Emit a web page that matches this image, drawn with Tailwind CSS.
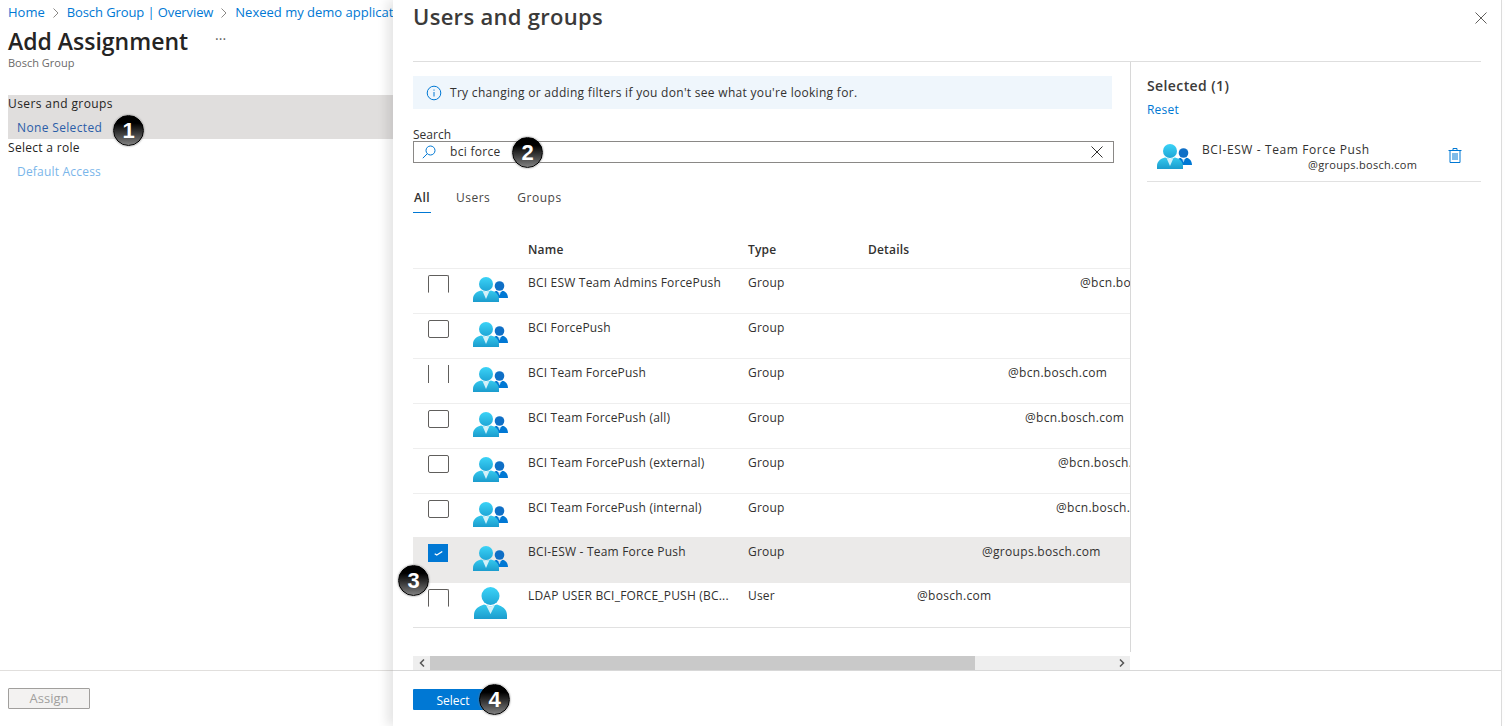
<!DOCTYPE html>
<html lang="en">
<head>
    <meta charset="UTF-8">
    <title>Add Assignment</title>
    <script src="https://cdn.jsdelivr.net/npm/@tailwindcss/browser@4"></script>
</head>
<body class="bg-white overflow-hidden font-['Open_Sans','Noto_Sans',sans-serif] text-[12px] text-[#323130]">

    <!-- shared icons -->
    <svg class="absolute w-0 h-0">
        <defs>
            <linearGradient id="headGrad" x1="0" y1="0" x2="0" y2="1"><stop offset="0" stop-color="#3bd3f7"/><stop offset="1" stop-color="#1fa6d6"/></linearGradient>
            <linearGradient id="bodyGrad" x1="0" y1="0" x2="0" y2="1"><stop offset="0" stop-color="#35c9ee"/><stop offset="1" stop-color="#1b9ccd"/></linearGradient>
        </defs>
        <symbol id="groupIcon" viewBox="0 0 35 25">
            <circle cx="26.500" cy="9" r="4.800" fill="#0f6fc6"/>
            <path d="M19 21c0-4 2-6.500 4.500-7.200l3 2.400 3-2.400C32.500 14.500 35 17 35 21z" fill="#0078d4"/>
            <path d="M25.300 15.500h2.400l-1.200 3z" fill="#b9dcf5"/>
            <circle cx="13" cy="7" r="7" fill="url(#headGrad)"/>
            <path d="M0 25v-3c0-5 4-7.500 8-8.500l5 1.500 5-1.500c4 1 8 3.500 8 8.500v3z" fill="url(#bodyGrad)"/>
            <path d="M9.500 14l3.500 1 3.500-1-3.500 8z" fill="#d4f1f9"/>
        </symbol>
        <symbol id="userIcon" viewBox="0 0 33 32">
            <circle cx="16.500" cy="9" r="9" fill="url(#headGrad)"/>
            <path d="M0 32v-4c0-6 5-9 10-10.500l6.500 2 6.500-2C28 19 33 22 33 28v4z" fill="url(#bodyGrad)"/>
            <path d="M12 18l4.500 1.500L21 18l-4.500 9z" fill="#d4f1f9"/>
        </symbol>
    </svg>

    <div class="flex w-[1509px] h-[726px]">

        <!-- Left blade -->
        <aside class="w-[393px] h-full flex flex-col shrink-0">
            <div class="flex-1 overflow-hidden">
                <nav class="flex items-center h-[25px] pl-2 whitespace-nowrap text-[13px] text-[#0078d4] overflow-hidden">
                    <span>Home</span>
                    <svg class="w-[8px] h-[10px] mx-[7px] shrink-0" viewBox="0 0 8 10" fill="none" stroke="#8a8886"><path d="M1.500.5 6 5 1.500 9.500"/></svg>
                    <span class="tracking-[-0.1px]">Bosch Group | Overview</span>
                    <svg class="w-[8px] h-[10px] mx-[7px] shrink-0" viewBox="0 0 8 10" fill="none" stroke="#8a8886"><path d="M1.500.5 6 5 1.500 9.500"/></svg>
                    <span>Nexeed my demo applicat</span>
                </nav>
                <div class="flex items-center h-[34px] pl-2 -mt-[1px]">
                    <h1 class="text-[23px] font-semibold text-[#252423] leading-none">Add Assignment</h1>
                    <span class="ml-[27px] text-[14px] leading-none text-[#605e5c] -mt-[4px]">···</span>
                </div>
                <p class="pl-2 text-[11px] leading-[14px] text-[#6b6a69] -mt-[2px]">Bosch Group</p>
                <div class="relative mt-[25px] ml-2 h-[44px] bg-[#e0dedd] pt-[1px]">
                    <p class="leading-[16px] text-[#252423] tracking-[0.4px]">Users and groups</p>
                    <p class="pl-[9px] mt-[8px] leading-[16px] text-[#2b5da8] tracking-[0.35px]">None Selected</p>
                </div>
                <p class="pl-2 mt-[1px] leading-[16px] text-[#252423] tracking-[0.3px]">Select a role</p>
                <p class="pl-[17px] mt-[8px] leading-[16px] text-[#7ab6ea] tracking-[0.2px]">Default Access</p>
            </div>
            <div class="h-[56px] border-t border-[#e1dfdd] pl-2 pt-[17px]">
                <button class="block w-[82px] h-[21px] bg-[#f3f2f1] border border-[#a19f9d] rounded-[1px] text-[#a19f9d] text-[13px] leading-none">Assign</button>
            </div>
        </aside>

        <!-- Right blade -->
        <section class="w-[1109px] h-full flex flex-col shrink-0 bg-white border-r border-[#dcdcdc] shadow-[-6px_0_10px_rgba(0,0,0,0.10)] z-10">
            <header class="relative h-[62px] ml-5 mr-5 border-b border-[#dedede]">
                <h2 class="text-[22px] leading-[32px] font-semibold text-[#3b3a39] tracking-[0.3px]">Users and groups</h2>
                <svg class="absolute -right-[6px] top-[12px] w-[12px] h-[12px]" viewBox="0 0 12 12" stroke="#605e5c" fill="none"><path d="M.5.5l11 11M11.500.5l-11 11"/></svg>
            </header>

            <div class="flex-1 flex min-h-0">
                <!-- Picker -->
                <div class="w-[738px] pl-5 border-r border-[#d8d8d8] h-[590px] shrink-0">
                    <div class="w-[699px] h-[33px] mt-[14px] bg-[#eff6fc] flex items-center pl-[13px]">
                        <svg class="w-[16px] h-[16px] shrink-0" viewBox="0 0 16 16" fill="none" stroke="#0078d4"><circle cx="8" cy="8" r="6.800"/><path d="M8 7v4.500M8 4.500v1.200"/></svg>
                        <span class="ml-[8px] text-[12px] tracking-[0.3px] text-[#323130] whitespace-nowrap">Try changing or adding filters if you don't see what you're looking for.</span>
                    </div>
                    <label class="block mt-[19px] leading-[13px] text-[12px] text-[#323130]">Search</label>
                    <div class="relative flex items-center w-[701px] h-[22px] border border-[#8a8886] pl-[8px] pr-[10px]">
                        <svg class="w-[14px] h-[14px] shrink-0" viewBox="0 0 14 14" fill="none" stroke="#0078d4"><circle cx="8.500" cy="5.500" r="4.500"/><path d="M5.300 8.700.8 13.200"/></svg>
                        <span class="ml-[14px] text-[#323130] tracking-[0.3px]">bci force</span>
                        <svg class="ml-auto w-[12px] h-[12px]" viewBox="0 0 12 12" stroke="#323130" fill="none"><path d="M.5.5l11 11M11.500.5l-11 11"/></svg>
                    </div>

                    <div class="flex mt-[26px] h-[24px] text-[#484644] tracking-[0.5px]">
                        <div class="w-[18px] h-[24px] border-b border-[#0078d4] font-semibold text-[#323130] leading-[18px] pl-[1px]">All</div>
                        <div class="ml-[25px] leading-[18px]">Users</div>
                        <div class="ml-[27px] leading-[18px]">Groups</div>
                    </div>

                    <!-- Table -->
                    <div class="w-[717px] overflow-hidden mt-[20px] tracking-[0.2px]">
                        <div class="flex h-[36px] pt-[8px] border-b border-[#eeeeee] font-semibold leading-[18px] text-[#323130] tracking-[0.2px]">
                            <span class="ml-[115px] w-[220px]">Name</span>
                            <span class="w-[120px]">Type</span>
                            <span>Details</span>
                        </div>

                        <div class="flex h-[45px] border-b border-[#eeeeee] whitespace-nowrap">
                            <div class="ml-[15px] mt-[6px] w-[21px] h-[18px] border border-[#605e5c] border-b-transparent rounded-t-[2px] shrink-0"></div>
                            <svg class="ml-[24px] mt-[8px] w-[35px] h-[25px] shrink-0"><use href="#groupIcon"/></svg>
                            <span class="ml-[20px] mt-[5px] w-[220px] leading-[18px] shrink-0">BCI ESW Team Admins ForcePush</span>
                            <span class="mt-[5px] w-[120px] leading-[18px] shrink-0">Group</span>
                            <span class="mt-[5px] pl-[212px] leading-[18px] tracking-[0.3px] shrink-0">@bcn.bosch.com</span>
                        </div>
                        <div class="flex h-[45px] border-b border-[#eeeeee] whitespace-nowrap">
                            <div class="ml-[15px] mt-[6px] w-[21px] h-[18px] border border-[#605e5c] rounded-[2px] shrink-0"></div>
                            <svg class="ml-[24px] mt-[8px] w-[35px] h-[25px] shrink-0"><use href="#groupIcon"/></svg>
                            <span class="ml-[20px] mt-[5px] w-[220px] leading-[18px] shrink-0">BCI ForcePush</span>
                            <span class="mt-[5px] w-[120px] leading-[18px] shrink-0">Group</span>
                        </div>
                        <div class="flex h-[45px] border-b border-[#eeeeee] whitespace-nowrap">
                            <div class="ml-[15px] mt-[6px] w-[21px] h-[18px] border-x border-[#605e5c] shrink-0"></div>
                            <svg class="ml-[24px] mt-[8px] w-[35px] h-[25px] shrink-0"><use href="#groupIcon"/></svg>
                            <span class="ml-[20px] mt-[5px] w-[220px] leading-[18px] shrink-0">BCI Team ForcePush</span>
                            <span class="mt-[5px] w-[120px] leading-[18px] shrink-0">Group</span>
                            <span class="mt-[5px] pl-[140px] leading-[18px] tracking-[0.3px] shrink-0">@bcn.bosch.com</span>
                        </div>
                        <div class="flex h-[45px] border-b border-[#eeeeee] whitespace-nowrap">
                            <div class="ml-[15px] mt-[6px] w-[21px] h-[18px] border border-[#605e5c] rounded-[2px] shrink-0"></div>
                            <svg class="ml-[24px] mt-[8px] w-[35px] h-[25px] shrink-0"><use href="#groupIcon"/></svg>
                            <span class="ml-[20px] mt-[5px] w-[220px] leading-[18px] shrink-0">BCI Team ForcePush (all)</span>
                            <span class="mt-[5px] w-[120px] leading-[18px] shrink-0">Group</span>
                            <span class="mt-[5px] pl-[157px] leading-[18px] tracking-[0.3px] shrink-0">@bcn.bosch.com</span>
                        </div>
                        <div class="flex h-[45px] border-b border-[#eeeeee] whitespace-nowrap">
                            <div class="ml-[15px] mt-[6px] w-[21px] h-[18px] border border-[#605e5c] rounded-[2px] shrink-0"></div>
                            <svg class="ml-[24px] mt-[8px] w-[35px] h-[25px] shrink-0"><use href="#groupIcon"/></svg>
                            <span class="ml-[20px] mt-[5px] w-[220px] leading-[18px] shrink-0">BCI Team ForcePush (external)</span>
                            <span class="mt-[5px] w-[120px] leading-[18px] shrink-0">Group</span>
                            <span class="mt-[5px] pl-[190px] leading-[18px] tracking-[0.3px] shrink-0">@bcn.bosch.com</span>
                        </div>
                        <div class="flex h-[45px] border-b border-[#eeeeee] whitespace-nowrap">
                            <div class="ml-[15px] mt-[6px] w-[21px] h-[18px] border border-[#605e5c] rounded-[2px] shrink-0"></div>
                            <svg class="ml-[24px] mt-[8px] w-[35px] h-[25px] shrink-0"><use href="#groupIcon"/></svg>
                            <span class="ml-[20px] mt-[5px] w-[220px] leading-[18px] shrink-0">BCI Team ForcePush (internal)</span>
                            <span class="mt-[5px] w-[120px] leading-[18px] shrink-0">Group</span>
                            <span class="mt-[5px] pl-[188px] leading-[18px] tracking-[0.3px] shrink-0">@bcn.bosch.com</span>
                        </div>
                        <div class="flex h-[46px] -mt-[2px] bg-[#ebeae9] whitespace-nowrap">
                            <div class="ml-[15px] mt-[7px] w-[20px] h-[18px] bg-[#0078d4] flex items-center justify-center shrink-0">
                                <svg class="w-[9px] h-[6px]" viewBox="0 0 9 6" fill="none" stroke="#fff" stroke-width="1.300"><path d="M.7 3.800 2.800 5 8.300 1.500"/></svg>
                            </div>
                            <svg class="ml-[25px] mt-[9px] w-[35px] h-[25px] shrink-0"><use href="#groupIcon"/></svg>
                            <span class="ml-[20px] mt-[6px] w-[220px] leading-[18px] shrink-0">BCI-ESW - Team Force Push</span>
                            <span class="mt-[6px] w-[120px] leading-[18px] shrink-0">Group</span>
                            <span class="mt-[6px] pl-[114px] leading-[18px] tracking-[0.3px] shrink-0">@groups.bosch.com</span>
                        </div>
                        <div class="flex h-[45px] border-b border-[#e1e1e1] whitespace-nowrap">
                            <div class="ml-[15px] mt-[6px] w-[21px] h-[18px] border border-[#605e5c] border-b-transparent rounded-t-[2px] shrink-0"></div>
                            <svg class="ml-[25px] mt-[4px] w-[33px] h-[32px] shrink-0"><use href="#userIcon"/></svg>
                            <span class="ml-[21px] mt-[4px] w-[220px] leading-[18px] shrink-0">LDAP USER BCI_FORCE_PUSH (BC...</span>
                            <span class="mt-[4px] w-[120px] leading-[18px] shrink-0">User</span>
                            <span class="mt-[4px] pl-[49px] leading-[18px] tracking-[0.3px] shrink-0">@bosch.com</span>
                        </div>
                    </div>

                    <!-- Horizontal scrollbar -->
                    <div class="flex w-[717px] h-[14px] mt-[28px] bg-[#eeeeee] items-center">
                        <div class="w-[17px] flex justify-center shrink-0">
                            <svg class="w-[6px] h-[8px]" viewBox="0 0 6 8" fill="none" stroke="#555" stroke-width="1.500"><path d="M5 .5 1.500 4 5 7.500"/></svg>
                        </div>
                        <div class="w-[545px] h-full bg-[#c9c9c9] shrink-0"></div>
                        <svg class="ml-auto mr-[5px] w-[6px] h-[8px]" viewBox="0 0 6 8" fill="none" stroke="#555" stroke-width="1.500"><path d="M1 .5 4.500 4 1 7.500"/></svg>
                    </div>
                </div>

                <!-- Selected -->
                <div class="flex-1 pl-[16px] pr-5">
                    <h3 class="mt-[14px] text-[14px] leading-[20px] font-semibold text-[#3b3a39] tracking-[0.4px]">Selected (1)</h3>
                    <p class="mt-[6px] text-[#0078d4] text-[12px] leading-[16px] tracking-[0.2px]">Reset</p>
                    <div class="flex mt-[17px] h-[47px] border-b border-[#e1e1e1]">
                        <svg class="ml-[10px] mt-[9px] w-[35px] h-[25px] shrink-0"><use href="#groupIcon"/></svg>
                        <div class="ml-[10px] w-[230px] whitespace-nowrap">
                            <p class="leading-[15px] mt-[7px] tracking-[0.6px] text-[#323130]">BCI-ESW - Team Force Push</p>
                            <p class="pl-[106px] leading-[15px] text-[11px] tracking-[0.3px] text-[#323130]">@groups.bosch.com</p>
                        </div>
                        <svg class="ml-[16px] mt-[13px] w-[14px] h-[15px] shrink-0" viewBox="0 0 14 15" fill="none" stroke="#0078d4"><path d="M.5 2.500h13M5 2.500V.5h4v2M2 2.500v12h10v-12M5 5v7M7 5v7M9 5v7"/></svg>
                    </div>
                </div>
            </div>

            <footer class="h-[56px] border-t border-[#d8d8d8] pl-5 pt-[18px] shrink-0">
                <button class="block w-[77px] h-[21px] bg-[#0078d4] rounded-[1px] text-white text-[12px] leading-none pl-[3px] pt-[2px]">Select</button>
            </footer>
        </section>
    </div>

    <!-- Step badges -->
    <div class="absolute left-[113px] top-[115px] w-[31px] h-[31px] rounded-full border border-black bg-[linear-gradient(to_bottom,#000_25%,#808080)] shadow-[0_0_2px_#777] z-20 flex items-center justify-center text-white font-bold text-[22px] leading-none font-['Liberation_Sans',sans-serif]">1</div>
    <div class="absolute left-[512px] top-[137px] w-[31px] h-[31px] rounded-full border border-black bg-[linear-gradient(to_bottom,#000_25%,#808080)] shadow-[0_0_2px_#777] z-20 flex items-center justify-center text-white font-bold text-[22px] leading-none font-['Liberation_Sans',sans-serif]">2</div>
    <div class="absolute left-[398px] top-[565px] w-[31px] h-[31px] rounded-full border border-black bg-[linear-gradient(to_bottom,#000_25%,#808080)] shadow-[0_0_2px_#777] z-20 flex items-center justify-center text-white font-bold text-[22px] leading-none font-['Liberation_Sans',sans-serif]">3</div>
    <div class="absolute left-[479px] top-[684px] w-[31px] h-[31px] rounded-full border border-black bg-[linear-gradient(to_bottom,#000_25%,#808080)] shadow-[0_0_2px_#777] z-20 flex items-center justify-center text-white font-bold text-[22px] leading-none font-['Liberation_Sans',sans-serif]">4</div>

</body>
</html>
